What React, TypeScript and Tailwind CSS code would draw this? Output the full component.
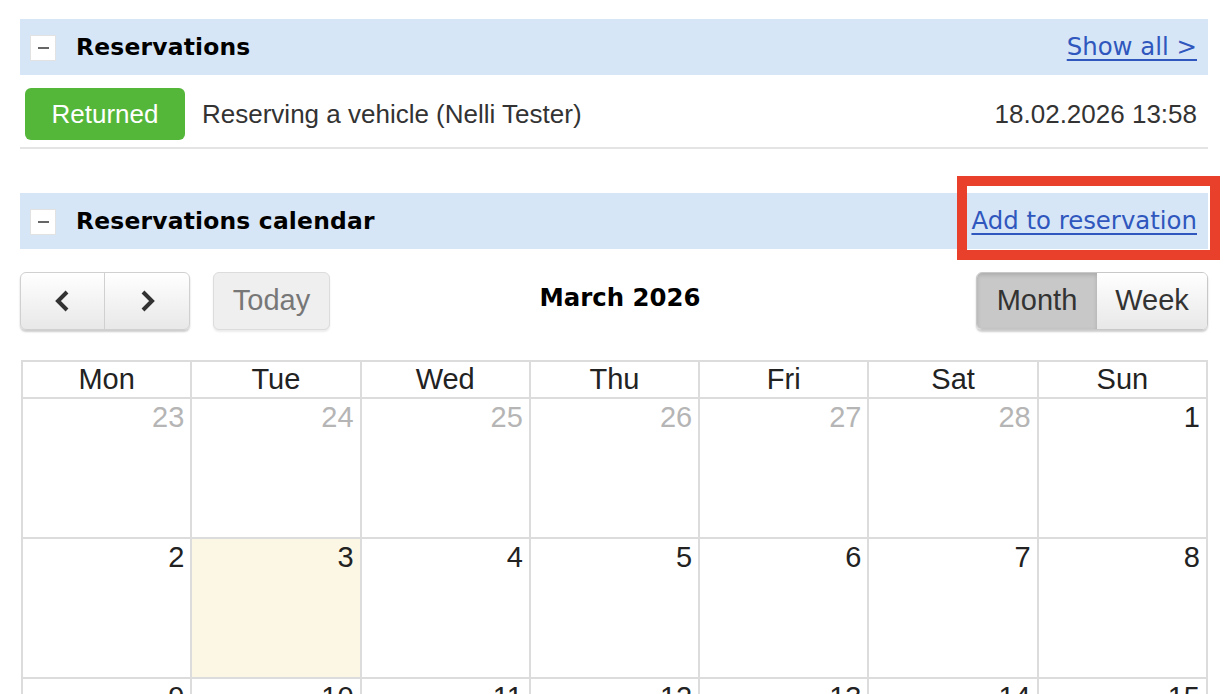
import React from "react";

const sans = { fontFamily: '"Liberation Sans", Arial, sans-serif' };
const dv = { fontFamily: '"DejaVu Sans", Verdana, sans-serif' };

function MinusBox() {
  return (
    <div className="w-[26px] h-[26px] bg-white border border-[#e2e2e2] flex items-center justify-center shrink-0">
      <div className="w-[11px] h-[2px] bg-[#666]" />
    </div>
  );
}

function SectionHeader({ title, link }: { title: string; link: string }) {
  return (
    <div className="h-[56px] bg-[#d7e6f7] flex items-center pl-[10px] pr-[11px] pt-[1px]">
      <MinusBox />
      <div className="ml-[20px] text-[23.4px] font-bold text-black tracking-[0.2px]" style={dv}>
        {title}
      </div>
      <div className="ml-auto text-[24.4px] text-[#2f57bd] underline underline-offset-[4px]" style={dv}>
        {link}
      </div>
    </div>
  );
}

const weeks: { n: number; muted?: boolean; today?: boolean }[][] = [
  [{ n: 23, muted: true }, { n: 24, muted: true }, { n: 25, muted: true }, { n: 26, muted: true }, { n: 27, muted: true }, { n: 28, muted: true }, { n: 1 }],
  [{ n: 2 }, { n: 3, today: true }, { n: 4 }, { n: 5 }, { n: 6 }, { n: 7 }, { n: 8 }],
  [{ n: 9 }, { n: 10 }, { n: 11 }, { n: 12 }, { n: 13 }, { n: 14 }, { n: 15 }],
];

const days = ["Mon", "Tue", "Wed", "Thu", "Fri", "Sat", "Sun"];

export default function App() {
  return (
    <div className="w-[1228px] h-[694px] overflow-hidden bg-white relative" style={sans}>
      <div className="pl-[20px] pr-[20px] pt-[19px]">
        <SectionHeader title="Reservations" link="Show all >" />
        <div className="h-[74px] flex items-start border-b-2 border-[#e4e4e4] pl-[5px] pr-[11px] pt-[13px]">
          <div className="w-[160px] h-[52px] rounded-[6px] bg-[#55b73a] text-white text-[26px] flex items-center justify-center">
            Returned
          </div>
          <div className="ml-[17px] h-[52px] flex items-center text-[26px] text-[#333]">Reserving a vehicle (Nelli Tester)</div>
          <div className="ml-auto h-[52px] flex items-center text-[26px] text-[#333]">18.02.2026 13:58</div>
        </div>
        <div className="mt-[44px]">
          <SectionHeader title="Reservations calendar" link="Add to reservation" />
        </div>
        <div className="mt-[23px] h-[58px] flex items-center">
          <div className="flex h-[58px] rounded-[6px] border border-[#d0d0d0] shadow-[0_2px_2px_rgba(0,0,0,0.2)] bg-gradient-to-b from-white to-[#e8e8e8] overflow-hidden">
            <div className="w-[84px] flex items-center justify-center border-r border-[#d0d0d0]">
              <svg width="22" height="26" viewBox="0 0 22 26"><path d="M15 4 L6 13 L15 22" fill="none" stroke="#333" strokeWidth="4" /></svg>
            </div>
            <div className="w-[84px] flex items-center justify-center">
              <svg width="22" height="26" viewBox="0 0 22 26"><path d="M7 4 L16 13 L7 22" fill="none" stroke="#333" strokeWidth="4" /></svg>
            </div>
          </div>
          <div className="ml-[23px] w-[117px] h-[58px] rounded-[6px] border border-[#dcdcdc] bg-[#efefef] shadow-[0_2px_2px_rgba(0,0,0,0.08)] flex items-center justify-center text-[29px] text-[#777]">
            Today
          </div>
          <div className="flex-1 text-center text-[24.4px] font-bold text-black -mt-[6px] pr-[66px]" style={dv}>
            March 2026
          </div>
          <div className="flex h-[58px] rounded-[6px] border border-[#c8c8c8] shadow-[0_2px_2px_rgba(0,0,0,0.2)] overflow-hidden">
            <div className="w-[120px] flex items-center justify-center bg-[#c8c8c8] text-[29px] text-[#333] shadow-[inset_0_2px_4px_rgba(0,0,0,0.15)]">
              Month
            </div>
            <div className="w-[110px] flex items-center justify-center bg-gradient-to-b from-white to-[#e8e8e8] text-[29px] text-[#333]">
              Week
            </div>
          </div>
        </div>
        <div className="mt-[30px] ml-[1px] border-l-2 border-t-2 border-[#dcdcdc]">
          <div className="grid grid-cols-7">
            {days.map((d) => (
              <div key={d} className="h-[37px] border-r-2 border-b-2 border-[#dcdcdc] text-center text-[29px] text-[#222] leading-[34px]">
                {d}
              </div>
            ))}
          </div>
          {weeks.map((w, i) => (
            <div key={i} className="grid grid-cols-7">
              {w.map((c) => (
                <div
                  key={c.n}
                  className={`h-[140px] border-r-2 border-b-2 border-[#dcdcdc] text-right pr-[6px] pt-[1px] text-[29px] leading-[34px] ${c.muted ? "text-[#b5b5b5]" : "text-[#222]"} ${c.today ? "bg-[#fcf7e4]" : ""}`}
                >
                  {c.n}
                </div>
              ))}
            </div>
          ))}
        </div>
      </div>
      <div className="absolute left-[957px] top-[176px] w-[263px] h-[84px] border-[10px] border-[#e8402a]" />
    </div>
  );
}
